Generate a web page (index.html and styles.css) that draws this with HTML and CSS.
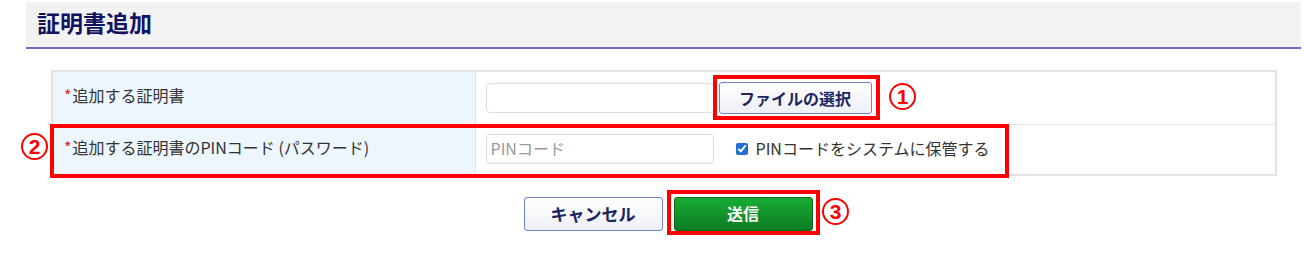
FILE: index.html
```html
<!DOCTYPE html>
<html lang="ja">
<head>
    <meta charset="UTF-8">
    <title>証明書追加</title>
    <link rel="stylesheet" href="styles.css">
</head>
<body>
    <div class="page">
        <div class="page-header">
            <h1>証明書追加</h1>
        </div>

        <div class="form-area">
            <table class="form-table">
                <tr class="row-file">
                    <th><span class="req">*</span>追加する証明書</th>
                    <td>
                        <div class="field">
                            <input type="text" class="text-input">
                            <button class="btn btn-file">ファイルの選択</button>
                        </div>
                    </td>
                </tr>
                <tr class="row-pin">
                    <th><span class="req">*</span>追加する証明書のPINコード (パスワード)</th>
                    <td>
                        <div class="field">
                            <input type="text" class="text-input" placeholder="PINコード">
                            <label class="keep">
                                <input type="checkbox" checked>
                                PINコードをシステムに保管する
                            </label>
                        </div>
                    </td>
                </tr>
            </table>

            <div class="actions">
                <button class="btn btn-cancel">キャンセル</button>
                <button class="btn btn-send">送信</button>
            </div>

            <!-- 説明用の注記 -->
            <div class="mark-box box-file"></div>
            <div class="mark-num num-1">1</div>
            <div class="mark-box box-pin"></div>
            <div class="mark-num num-2">2</div>
            <div class="mark-box box-send"></div>
            <div class="mark-num num-3">3</div>
        </div>
    </div>
</body>
</html>
```

FILE: styles.css
```css
* {
    margin: 0;
    padding: 0;
    box-sizing: border-box;
}
body {
    font-family: "Noto Sans CJK JP", "Noto Sans", sans-serif;
    background: #fff;
    color: #333;
}
.page {
    width: 1304px;
    height: 256px;
}
.page-header {
    margin: 2px 3px 0 26px;
    height: 47px;
    background: #f2f2f2;
    border-bottom: 2px solid #6e6ebd;
    display: flex;
    align-items: center;
    padding-left: 11px;
}
.page-header h1 {
    font-size: 23px;
    font-weight: 700;
    color: #121262;
    line-height: 1;
    margin-top: -4px;
}
.form-area {
    position: relative;
    padding: 21px 0 0 51px;
}
.form-table {
    width: 1226px;
    border-collapse: collapse;
    border: 2px solid #e2e2e2;
}
.form-table th,
.form-table td {
    border: 1px solid #e2e2e2;
    font-weight: 400;
    text-align: left;
    vertical-align: middle;
}
.form-table th {
    width: 423px;
    background: #edf5fd;
    font-size: 16px;
    color: #333;
    padding: 0 0 5px 11px;
}
.row-file {
    height: 53px;
}
.row-pin {
    height: 51px;
}
.req {
    color: #e52020;
    margin-right: 1px;
}
.form-table td {
    padding-left: 10px;
}
.field {
    display: flex;
    align-items: center;
}
.text-input {
    width: 228px;
    height: 30px;
    border: 1px solid #dcdcdc;
    border-radius: 4px;
    padding: 0 4px 3px;
    font-family: inherit;
    font-size: 16px;
    color: #333;
}
.text-input::placeholder {
    color: #999;
}
.btn {
    font-family: inherit;
    font-weight: 700;
    font-size: 16px;
    border-radius: 3px;
    cursor: pointer;
}
.btn-file,
.btn-cancel {
    background: linear-gradient(#ffffff, #eef0f6);
    border: 1px solid #7282d0;
    color: #1c2562;
}
.btn-file {
    width: 153px;
    height: 32px;
    margin-left: 5px;
}
.keep {
    display: flex;
    align-items: center;
    margin: -3px 0 0 22px;
    font-size: 16px;
    color: #333;
}
.keep input {
    width: 12px;
    height: 12px;
    margin: 2px 8px 0 0;
    accent-color: #1f6fd1;
}
.actions {
    display: flex;
    justify-content: center;
    gap: 11px;
    width: 1226px;
    padding: 21px 0 0 8px;
}
.actions .btn {
    width: 139px;
    height: 34px;
    padding-bottom: 2px;
}
.btn-cancel {
    font-size: 17px;
}
.btn-send {
    background: linear-gradient(#17ad36, #0d7b22);
    border: 1px solid #0a6b1a;
    color: #fff;
}

/* 注記 */
.mark-box {
    position: absolute;
    border: 4px solid #ff0000;
}
.box-file {
    left: 713px;
    top: 26px;
    width: 167px;
    height: 45px;
}
.box-pin {
    left: 50px;
    top: 75px;
    width: 959px;
    height: 54px;
}
.box-send {
    left: 667px;
    top: 141px;
    width: 153px;
    height: 45px;
}
.mark-num {
    position: absolute;
    width: 27px;
    height: 27px;
    border: 2px solid #ff0000;
    border-radius: 50%;
    color: #ff0000;
    font-family: "Liberation Sans", sans-serif;
    font-weight: 700;
    font-size: 21px;
    line-height: 23px;
    text-align: center;
}
.num-1 {
    left: 889px;
    top: 34px;
}
.num-2 {
    left: 21px;
    top: 84px;
}
.num-3 {
    left: 822px;
    top: 149px;
}
```
